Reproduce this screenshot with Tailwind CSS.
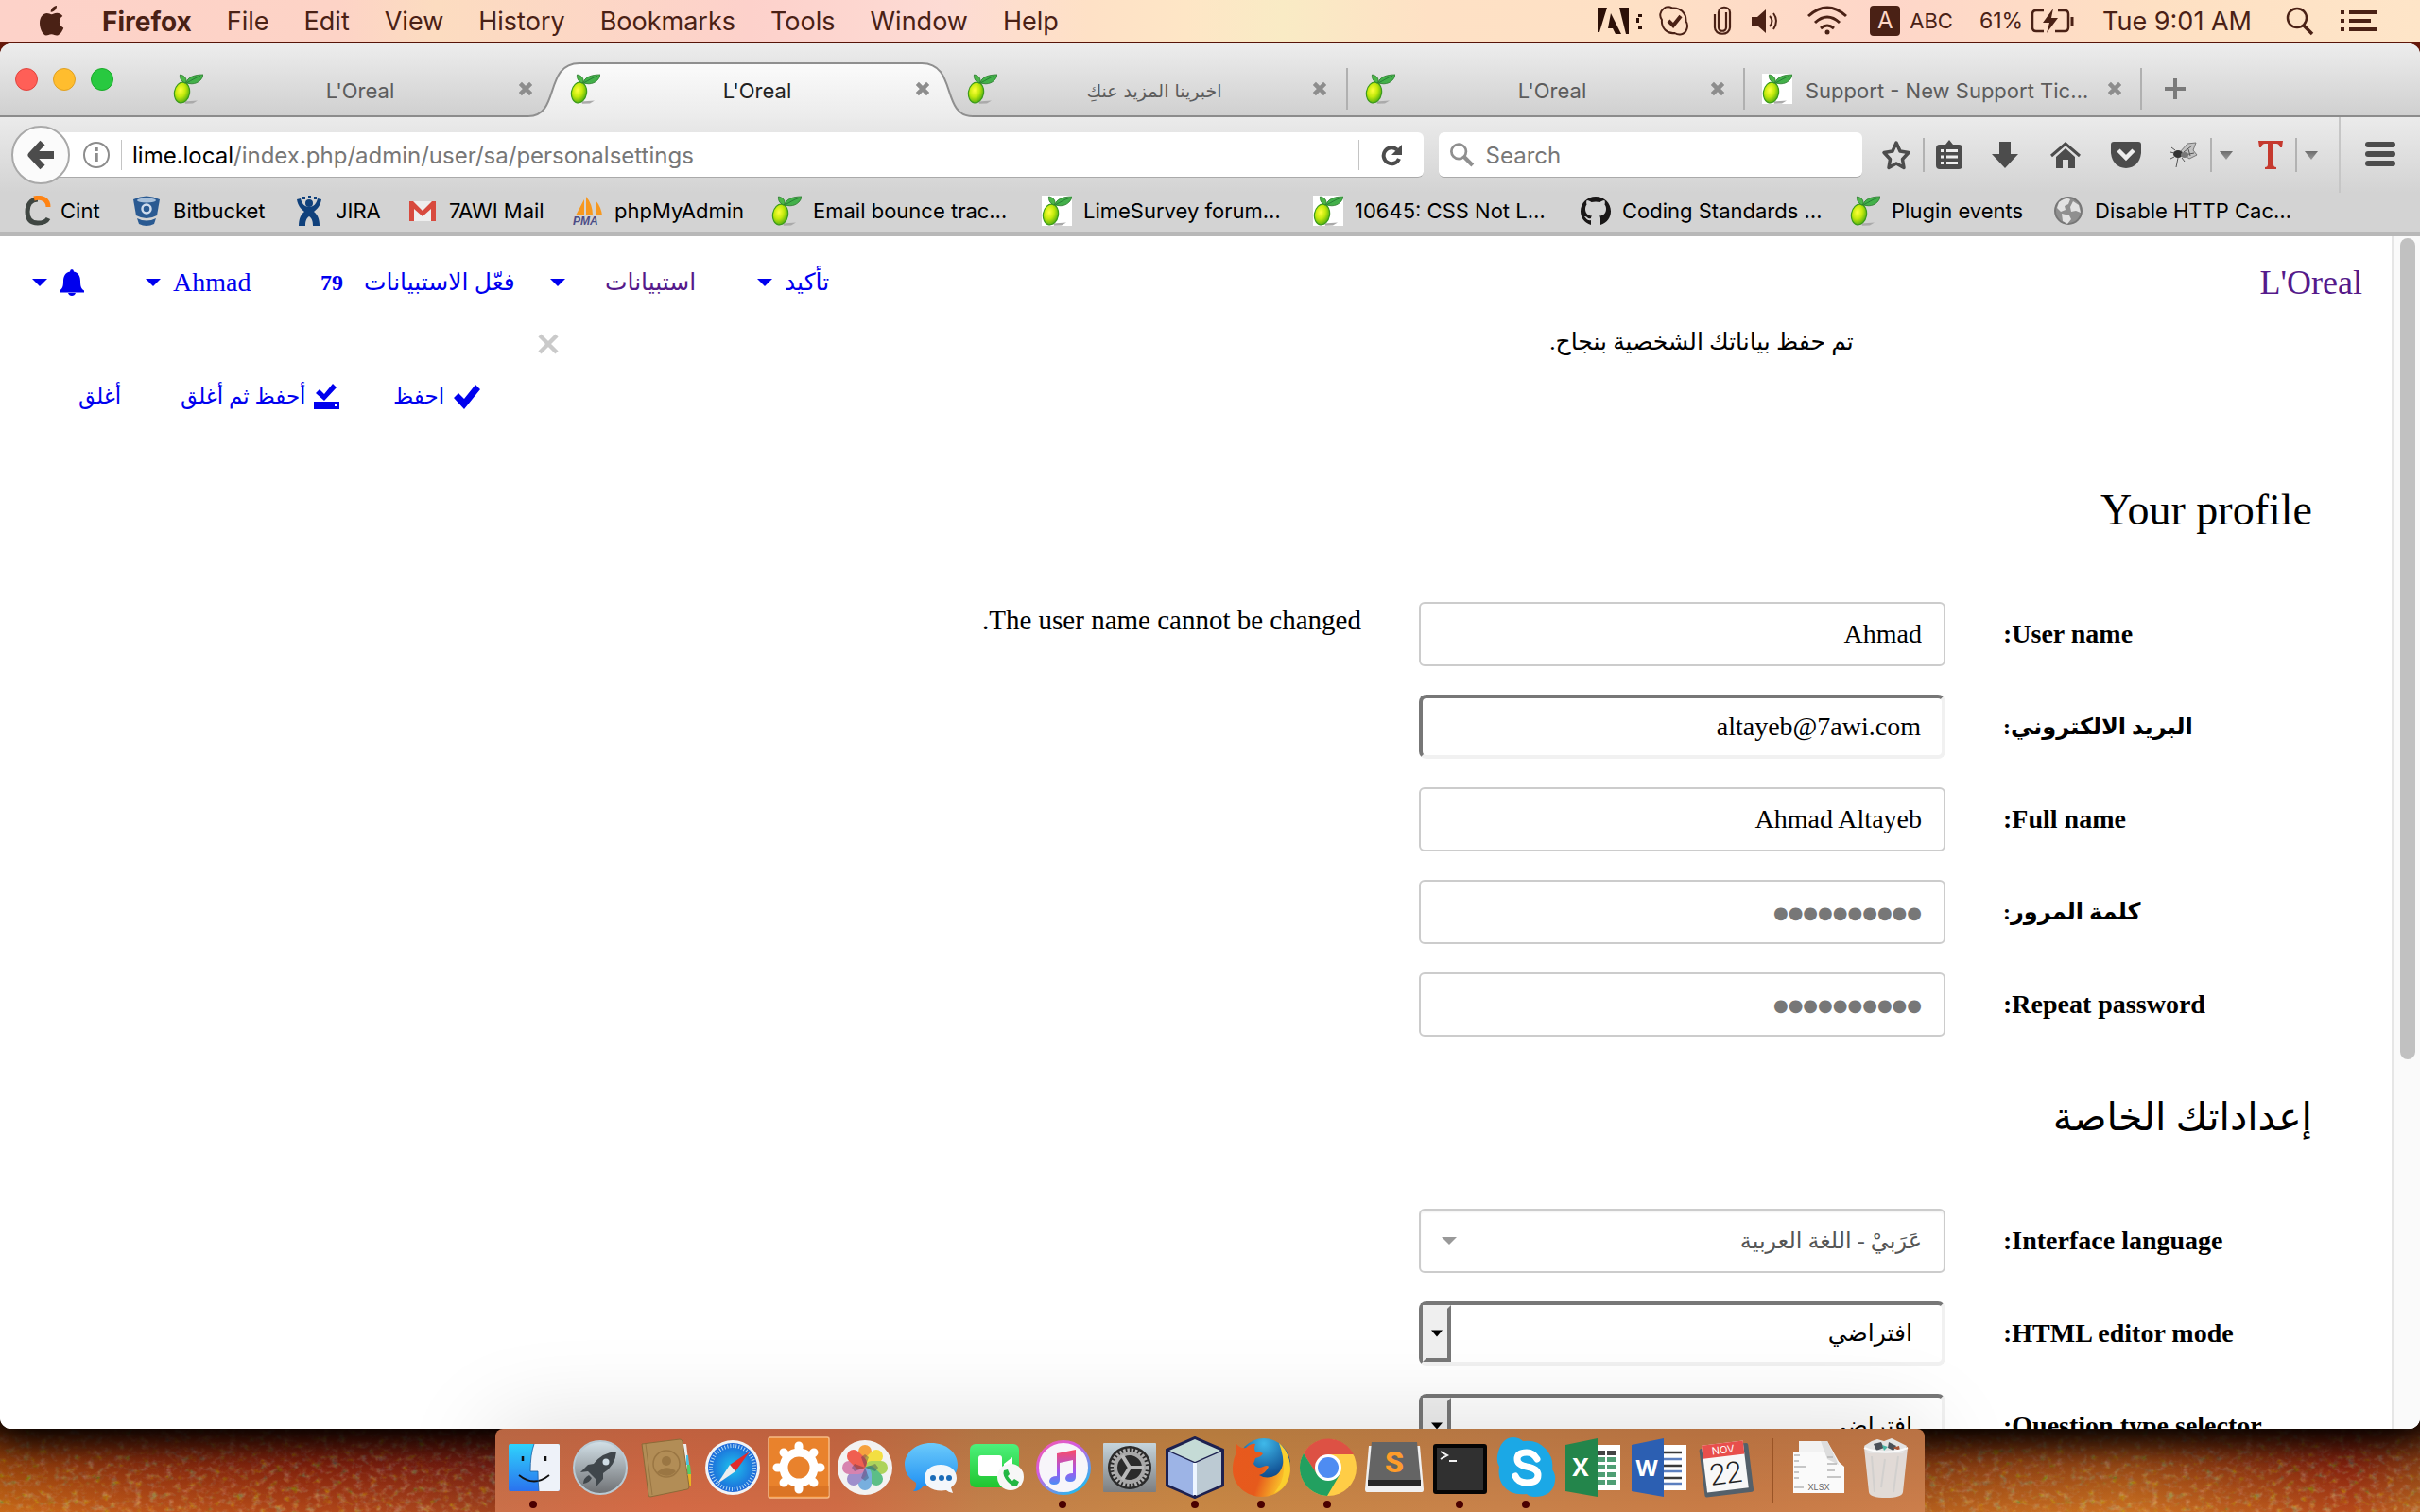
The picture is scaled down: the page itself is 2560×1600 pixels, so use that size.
<!DOCTYPE html>
<html lang="ar">
<head>
<meta charset="utf-8">
<title>L'Oreal</title>
<script src="https://cdn.jsdelivr.net/npm/@tailwindcss/browser@4"></script>
</head>
<body class="relative flex h-screen flex-col overflow-hidden bg-[#7a1d0c] font-['Inter','DejaVu_Sans',sans-serif] text-black">

<!-- shared symbols -->
<svg class="absolute h-0 w-0" aria-hidden="true">
  <defs>
    <radialGradient id="limeFill" cx=".38" cy=".4" r=".65"><stop offset="0" stop-color="#ffff3c"/><stop offset=".5" stop-color="#c3ea0c"/><stop offset="1" stop-color="#4fae12"/></radialGradient>
    <linearGradient id="arrowFill" x1="0" y1="0" x2="0" y2="1"><stop offset="0" stop-color="#6c6c6c"/><stop offset="1" stop-color="#9a9a9a"/></linearGradient>
    <symbol id="lime" viewBox="0 0 32 32">
      <path d="M12 29.500l14-1-5 3-8 .3z" fill="#aaa"/>
      <ellipse cx="9.500" cy="20" rx="8" ry="11" transform="rotate(10 9.500 20)" fill="url(#limeFill)" stroke="#3c9a1c" stroke-width="1.200"/>
      <path d="M13 10C8 8 7 4 7.500 1c5 1 7 4 6.500 8z" fill="#4cb648" stroke="#2a7a2c" stroke-width=".8"/>
      <path d="M14 10C15 4 22 1 32 1c-1 6-7 11-15 9.500z" fill="#43b04a" stroke="#2a7a2c" stroke-width=".8"/>
      <path d="M15 9.500C20 7 24 4 29 2.500" fill="none" stroke="#1e7430" stroke-width=".8"/>
    </symbol>
    <symbol id="close" viewBox="0 0 16 16"><path d="M3 3l10 10M13 3L3 13" stroke="#8d8d8d" stroke-width="4"/></symbol>
    <symbol id="caret" viewBox="0 0 16 8"><path d="M0 0h16L8 8z" fill="#0000ee"/></symbol>
    <symbol id="drop" viewBox="0 0 14 9"><path d="M0 0h14L7 9z" fill="url(#arrowFill)"/></symbol>
  </defs>
</svg>

<!-- desktop wallpaper -->
<svg class="absolute bottom-0 left-0 h-[100px] w-full" viewBox="0 0 2560 100" preserveAspectRatio="none" aria-hidden="true">
  <defs>
    <linearGradient id="wallX"><stop offset="0" stop-color="#b8580f"/><stop offset=".06" stop-color="#a83a12"/><stop offset=".13" stop-color="#98260f"/><stop offset=".2" stop-color="#8a2518"/><stop offset=".8" stop-color="#a85018"/><stop offset=".88" stop-color="#bc621c"/><stop offset=".93" stop-color="#a84416"/><stop offset=".97" stop-color="#a02a12"/><stop offset="1" stop-color="#a4511a"/></linearGradient>
    <linearGradient id="wallY" x1="0" y1="0" x2="0" y2="1"><stop offset=".1" stop-color="#1c0600" stop-opacity=".8"/><stop offset=".5" stop-color="#4a1206" stop-opacity=".3"/><stop offset="1" stop-color="#e8902c" stop-opacity=".3"/></linearGradient>
    <filter id="paint" x="0" y="0" width="100%" height="100%"><feTurbulence type="fractalNoise" baseFrequency=".12 .15" numOctaves="3" seed="7"/><feColorMatrix values="1.600 0 0 0 -.25  0 1.500 0 0 -.4  0 0 1.600 0 -.5  0 2.500 0 0 -1.050"/></filter>
  </defs>
  <rect width="2560" height="100" fill="url(#wallX)"/>
  <rect width="2560" height="100" filter="url(#paint)" opacity=".42"/>
  <rect width="2560" height="100" fill="url(#wallY)"/>
</svg>

<!-- system menu bar -->
<header class="z-10 mb-[2px] flex h-11 shrink-0 items-center whitespace-nowrap bg-[linear-gradient(90deg,#fdd2c9,#fdd3c6_14%,#fcdcc0_18%,#fdd1cb_31%,#fddbd4_39%,#fee1c6_45%,#fee6c6_49%,#f9ebc5_53%,#fee1c5_59%,#fee0c5_68%,#fed6c9_78%,#fee0c3_89%,#fee5c8)] pl-10 pr-[46px] text-[27px] leading-8 text-[#4a2115]">
  <svg class="mr-10 h-8 w-7" viewBox="0 0 28 32" fill="#4a2115"><path d="M20 0c.3 3-2.600 7-6.300 6.700C13.400 3.600 16.500.5 20 0zM14.500 9.200c1.500 0 3-1.400 5.800-1.400 2.600 0 4.800 1.500 6 3.300-5 3-4.200 10.200.9 12.300C26 27 23 31.500 20 31.500c-2.200 0-2.900-1.300-5.600-1.300-2.600 0-3.500 1.300-5.500 1.300C5.500 31.500 2 24.500 2 18.500 2 11.500 6 8 9.500 8c2.200 0 3.800 1.200 5 1.200z"/></svg>
  <nav class="flex items-center gap-[37px] pt-[2px]" dir="ltr">
    <span class="text-[28px] font-bold">Firefox</span><span>File</span><span>Edit</span><span>View</span><span>History</span><span>Bookmarks</span><span>Tools</span><span>Window</span><span>Help</span>
  </nav>
  <div class="ml-auto flex items-center" dir="ltr">
    <svg class="h-8 w-[50px]" viewBox="0 0 50 32" fill="#2c1008"><path d="M0 2h10L2 28H0zM23 2h10v28h-3zM14 8l11 22h-6l-3-6h-5z"/><path d="M43 9h4v3h-4zM41 13h3v5h-3zM43 22h4v3h-4z"/></svg>
    <svg class="ml-[14px] h-8 w-[34px]" viewBox="0 0 34 32" fill="none" stroke="#4a2115" stroke-width="2"><path d="M6 3c3-2.500 6-2 9-.5 8-1 15 5 14.500 14 3 4 1.500 13-6 14-2 .3-4-.3-6-1.500C10 30 3 24 4 15 1 11 2 6 6 3z"/><path d="M11 16l5 5 8-10" stroke-width="4"/></svg>
    <svg class="ml-6 h-8 w-5" viewBox="0 0 20 32" fill="none" stroke="#4a2115" stroke-width="2.200"><path d="M6 7v16c0 5 8 5 8 0V7M2 9v14c0 9 16 9 16 0V7C18 0 6 0 6 7"/></svg>
    <svg class="ml-5 mr-1 h-8 w-8" viewBox="0 0 32 32" fill="#4a2115"><path d="M1 12h6l9-8v25l-9-8H1z"/><path d="M20 11q5 5 0 11" fill="none" stroke="#4a2115" stroke-width="2"/><path d="M24 8q6 8 0 17" fill="none" stroke="#4a2115" stroke-width="2"/></svg>
    <svg class="ml-6 h-8 w-[42px]" viewBox="0 0 42 32" fill="none" stroke="#4a2115" stroke-width="3"><path d="M1 11q20-18 40 0M8 18q13-12 26 0M14 24q7-6 14 0"/><circle cx="21" cy="28" r="2.500" fill="#4a2115" stroke="none"/></svg>
    <span class="ml-6 flex h-8 w-8 items-center justify-center rounded bg-[#4a2115] text-2xl text-[#fed8c8]">A</span>
    <span class="ml-[10px] text-[22px]">ABC</span>
    <span class="ml-7 text-[23px]">61%</span>
    <svg class="ml-2 h-7 w-12" viewBox="0 0 48 28" fill="none" stroke="#4a2115" stroke-width="2.500"><path d="M14 3H6Q2 3 2 7v14q0 4 4 4h8M29 3h7q4 0 4 4v14q0 4-4 4H26"/><path d="M24 1L13 16h7l-3 11 12-16h-7z" fill="#4a2115" stroke="none"/><path d="M44 10v9" stroke-width="3"/></svg>
    <span class="ml-7 pt-[2px]">Tue 9:01 AM</span>
    <svg class="ml-9 h-8 w-[30px]" viewBox="0 0 30 32" fill="none" stroke="#4a2115" stroke-width="2.500"><circle cx="12" cy="13" r="10"/><path d="M19 21l9 9" stroke-width="3.500"/></svg>
    <svg class="ml-7 h-6 w-[38px]" viewBox="0 0 38 24" fill="#4a2115"><path d="M0 1h4v4H0zM0 10h4v4H0zM0 19h4v4H0zM9 1h29v4H9zM9 10h23v4H9zM9 19h29v4H9z"/></svg>
  </div>
</header>

<!-- browser window -->
<div class="relative flex min-h-0 flex-1 flex-col overflow-hidden rounded-xl bg-white shadow-[0_10px_40px_#000]">

  <!-- tab strip -->
  <div class="flex h-[78px] shrink-0 items-center border-b-2 border-[#8c8c8c] bg-linear-to-b from-[#ededed] to-[#d0d0d0] pl-4 text-[22px] text-[#5c5c5c] [&_span]:pt-1">
    <div class="flex w-[148px] gap-4">
      <button class="size-6 rounded-full border border-[#e0443e] bg-[#ff5f57]" aria-label="Close window"></button>
      <button class="size-6 rounded-full border border-[#dfa023] bg-[#ffbd2e]" aria-label="Minimise window"></button>
      <button class="size-6 rounded-full border border-[#1aab29] bg-[#28c940]" aria-label="Zoom window"></button>
    </div>
    <div class="flex h-full items-center pt-5">
      <div class="flex h-full w-[420px] items-center px-[19px]">
        <svg class="size-8 shrink-0"><use href="#lime"/></svg><span class="flex-1 text-center">L'Oreal</span><button aria-label="Close tab"><svg class="size-[18px]"><use href="#close"/></svg></button>
      </div>
      <div class="relative z-10 flex h-full w-[420px] items-center px-[19px] text-[#222]">
        <svg class="absolute -left-[25px] top-0 h-[60px] w-[470px]" viewBox="0 0 470 60"><defs><linearGradient id="tabFill" x1="0" y1="0" x2="0" y2="1"><stop offset="0" stop-color="#fbfbfb"/><stop offset="1" stop-color="#ebebeb"/></linearGradient></defs><path d="M0 57C34 57 16 1 54 1H416C454 1 436 57 470 57V60H0z" fill="url(#tabFill)"/><path d="M0 57C34 57 16 1 54 1H416C454 1 436 57 470 57" fill="none" stroke="#8f8f8f" stroke-width="2"/></svg>
        <svg class="relative size-8 shrink-0"><use href="#lime"/></svg><span class="relative flex-1 text-center">L'Oreal</span><button class="relative" aria-label="Close tab"><svg class="size-[18px]"><use href="#close"/></svg></button>
      </div>
      <div class="flex h-full w-[420px] items-center px-[19px]">
        <svg class="size-8 shrink-0"><use href="#lime"/></svg><span class="flex-1 text-center font-['DejaVu_Sans',sans-serif] text-[19px]" dir="rtl">اخبرينا المزيد عنكِ</span><button aria-label="Close tab"><svg class="size-[18px]"><use href="#close"/></svg></button>
      </div>
      <div class="h-11 w-[2px] bg-[#b0b0b0]"></div>
      <div class="flex h-full w-[418px] items-center px-[18px]">
        <svg class="size-8 shrink-0"><use href="#lime"/></svg><span class="flex-1 text-center">L'Oreal</span><button aria-label="Close tab"><svg class="size-[18px]"><use href="#close"/></svg></button>
      </div>
      <div class="h-11 w-[2px] bg-[#b0b0b0]"></div>
      <div class="flex h-full w-[418px] items-center px-[18px]">
        <svg class="size-8 shrink-0 bg-white"><use href="#lime"/></svg><span class="flex-1 whitespace-nowrap pl-[14px] text-left">Support - New Support Tic…</span><button aria-label="Close tab"><svg class="size-[18px]"><use href="#close"/></svg></button>
      </div>
      <div class="h-11 w-[2px] bg-[#b0b0b0]"></div>
      <button class="ml-6" aria-label="New tab"><svg class="size-[22px]" viewBox="0 0 22 22"><path d="M11 0v22M0 11h22" stroke="#7a7a7a" stroke-width="4"/></svg></button>
    </div>
  </div>

  <!-- navigation toolbar -->
  <div class="flex h-[80px] shrink-0 items-center bg-linear-to-b from-[#ebebeb] to-[#d3d3d3] pl-3 pr-[26px]" dir="ltr">
    <button class="z-10 flex size-[62px] shrink-0 items-center justify-center rounded-full border-2 border-[#a9a9a9] bg-[#fbfbfb]" aria-label="Back"><svg class="h-8 w-8" viewBox="0 0 32 32" fill="none" stroke="#4c4c4c"><path d="M18 3L6 16l12 13" stroke-width="7" stroke-linejoin="round"/><path d="M6 16h24" stroke-width="8"/></svg></button>
    <div class="-ml-4 flex h-12 flex-1 items-center rounded-r-md border-b border-[#aaa] bg-white">
      <svg class="ml-[30px] size-7" viewBox="0 0 28 28" fill="none" stroke="#8c8c8c"><circle cx="14" cy="14" r="13" stroke-width="2"/><path d="M14 12v9M14 6v4" stroke-width="3.500"/></svg>
      <div class="ml-3 mr-[11px] h-8 w-px bg-[#c4c4c4]"></div>
      <div class="flex-1 pt-[3px] text-2xl text-[#777]"><span class="text-black">lime.local</span>/index.php/admin/user/sa/personalsettings</div>
      <div class="h-8 w-px bg-[#c4c4c4]"></div>
      <button class="mx-[22px]" aria-label="Reload"><svg class="size-6" viewBox="0 0 24 24" fill="none" stroke="#4c4c4c" stroke-width="4"><path d="M18 6.500A8.500 8.500 0 1 0 20 16"/><path d="M23 1v11H12z" fill="#4c4c4c" stroke="none"/></svg></button>
    </div>
    <div class="ml-4 flex h-12 w-[448px] items-center rounded-md border-b border-[#aaa] bg-white pl-3">
      <svg class="size-7" viewBox="0 0 28 28" fill="none" stroke="#8f8f8f"><circle cx="10" cy="10" r="8.500" stroke-width="3"/><path d="M16 16l10 10" stroke-width="4.500"/></svg>
      <input class="ml-3 w-full pt-[3px] text-2xl outline-none placeholder:text-[#777]" type="search" placeholder="Search" aria-label="Search">
    </div>
    <svg class="ml-5 size-8" viewBox="0 0 32 32" fill="none" stroke="#4c4c4c" stroke-width="3.500" stroke-linejoin="round"><path d="M16 3l4 9 9 1.500-6.500 7 1.500 9L16 25l-8 4.500 1.500-9L3 13.500 12 12z"/></svg>
    <div class="ml-3 h-9 w-[2px] bg-[#b2b2b2]"></div>
    <svg class="ml-3 h-8 w-7" viewBox="0 0 28 32"><path d="M10 5l4-5 4 5h6q4 0 4 4v18q0 4-4 4H4q-4 0-4-4V9q0-4 4-4z" fill="#4c4c4c"/><path d="M5 10h3v3H5zM11 10h12v3H11zM5 16.500h3v3H5zM11 16.500h12v3H11zM5 23h3v3H5zM11 23h12v3H11z" fill="#eee"/></svg>
    <svg class="ml-[31px] h-7 w-7" viewBox="0 0 28 28" fill="#4c4c4c"><path d="M8 0h12v13h8L14 28 0 13h8z"/></svg>
    <svg class="ml-[34px] h-7 w-8" viewBox="0 0 32 28" fill="none" stroke="#4c4c4c"><path d="M1 15L16 2l15 13" stroke-width="3"/><path d="M6 16L16 7l10 9v12h-7v-9h-6v9H6z" fill="#4c4c4c" stroke="none"/></svg>
    <svg class="ml-8 h-7 w-8" viewBox="0 0 32 28"><path d="M3 0h26q3 0 3 3v9Q30 27 16 28 2 27 0 12V3q0-3 3-3z" fill="#4c4c4c"/><path d="M8 9l8 8 8-8" fill="none" stroke="#eee" stroke-width="4.500"/></svg>
    <svg class="ml-7 h-7 w-[34px]" viewBox="0 0 34 28"><path d="M13 11L21 2l9-1-3 8 4 5-8 4z" fill="#c2c2c2" stroke="#777"/><path d="M17 11l9-7M18 14l10-2M22 8l2 7" stroke="#555"/><ellipse cx="11" cy="13" rx="5" ry="4" fill="#333"/><ellipse cx="18" cy="14" rx="4" ry="3" fill="#777"/><path d="M8 9L4 6M7 12l-4-1M7 16l-4 2M11 17l-2 10M15 17l3 4" stroke="#555"/></svg>
    <div class="ml-[11px] h-9 w-[2px] bg-[#b2b2b2]"></div>
    <svg class="ml-2 h-[9px] w-[14px]"><use href="#drop"/></svg>
    <svg class="ml-[26px] h-8 w-7" viewBox="0 0 28 32"><path d="M1 1h26l-1 7h-2q-1-4-4-4h-3v22q0 3 3 3v2H8v-2q3 0 3-3V4H8Q5 4 4 8H2z" fill="#c5392e"/></svg>
    <div class="ml-3 h-9 w-[2px] bg-[#b2b2b2]"></div>
    <svg class="ml-2 h-[9px] w-[14px]"><use href="#drop"/></svg>
    <div class="ml-[22px] h-full w-[2px] bg-[#c6c6c6]"></div>
    <button class="ml-[26px]" aria-label="Open menu"><svg class="h-7 w-8" viewBox="0 0 32 28" fill="#4c4c4c"><rect width="32" height="6" rx="3"/><rect y="10" width="32" height="6" rx="3"/><rect y="20" width="32" height="6" rx="3"/></svg></button>
  </div>

  <!-- bookmarks toolbar -->
  <nav class="flex h-[46px] shrink-0 items-start overflow-hidden whitespace-nowrap border-b-4 border-[#b8b8b8] bg-[#d3d3d3] pl-6 text-[22px] leading-[38px] [&_a]:flex [&_a]:shrink-0 [&_a]:items-center [&_svg]:mr-3 [&_svg]:size-8" dir="ltr">
    <a href="#" class="w-[115px]"><svg viewBox="0 0 32 32" fill="none" stroke-width="5"><path d="M16 4C8 4 5 10 5 17c0 8 4 12 11 12 5 0 9-1 11-5" stroke="#3f4642"/><path d="M12 3c8-2 15 1 15 9" stroke="#ff8414"/></svg><span class="-ml-1">Cint</span></a>
    <a href="#" class="w-[172px]"><svg viewBox="0 0 32 32"><path d="M2 4Q16-3 30 4l-3 17q-11 6-22 0z" fill="#2a5a92"/><ellipse cx="16" cy="5" rx="10" ry="2.500" fill="#a8c0da"/><circle cx="16" cy="14" r="4.500" fill="#2a5a92" stroke="#cfdced" stroke-width="2.500"/><path d="M6 24q10 5 20 0l-2 6q-8 4-16 0z" fill="#2a5a92"/></svg>Bitbucket</a>
    <a href="#" class="w-[120px]"><svg viewBox="0 0 32 32" fill="#10417c"><circle cx="16" cy="8" r="4"/><path d="M9 1h3v3H9zM15 0h3v3h-3zM21 1h3v3h-3zM3 4l4-1c1 5 4 9 9 9s8-4 9-9l4 1c-1 6-4 10-8 13 4 3 6 8 6 15h-7c0-5-1-8-4-10-3 2-4 5-4 10H5c0-7 2-12 6-15C7 14 4 10 3 4z"/></svg>JIRA</a>
    <a href="#" class="w-[175px]"><svg viewBox="0 0 32 32"><path d="M2 6h28v21H2z" fill="#eee"/><path d="M2 27V6h4l10 10L26 6h4v21h-5V14l-9 8-9-8v13z" fill="#d84a3e"/></svg>7AWI Mail</a>
    <a href="#" class="w-[210px]"><svg viewBox="0 0 32 32"><path d="M12 4v17H3zM14 1v20h7q0-12-7-20zM24 5v16h7q-1-9-7-16z" fill="#f7981f"/><text x="0" y="31" font-family="Liberation Sans" font-size="12" font-weight="700" font-style="italic" fill="#4c4c86">PMA</text></svg>phpMyAdmin</a>
    <a href="#" class="w-[286px]"><svg><use href="#lime"/></svg>Email bounce trac…</a>
    <a href="#" class="w-[287px]"><svg class="bg-white"><use href="#lime"/></svg>LimeSurvey forum…</a>
    <a href="#" class="w-[283px]"><svg class="bg-white"><use href="#lime"/></svg>10645: CSS Not L…</a>
    <a href="#" class="w-[285px]"><svg viewBox="0 0 32 32"><path d="M16 1C7 1 0 8 0 16.500 0 23 4 29 11 31v-5c-4 1-5-2-7-4 3-.5 3 3 7 2 0-1 .5-2 1-2.500C7 21 5 18 5 14c0-2 .5-3 1.500-4.500C6 8 6 6 6.700 5 9 5 10 6 11.500 7q4.500-1 9 0C22 6 23 5 25.300 5c.7 1 .7 3 .2 4.500C26.500 11 27 12 27 14c0 4-2 7-7 7.500 1 1 1 2 1 4V31c7-2 11-8 11-14.500C32 8 25 1 16 1z" fill="#191717"/></svg>Coding Standards …</a>
    <a href="#" class="w-[215px]"><svg><use href="#lime"/></svg>Plugin events</a>
    <a href="#"><svg viewBox="0 0 32 32"><circle cx="16" cy="16" r="14" fill="#8f8f8f" stroke="#777" stroke-width="2"/><path d="M6 7q8-6 12-3l-2 5-4 2 1 4-5 2-4-4zM21 6l6 4 2 8-5-2-5 1-1-5zM9 19l8 2 2 4-4 5-5-3z" fill="#e2e2e2"/></svg>Disable HTTP Cac…</a>
  </nav>

  <!-- page viewport -->
  <div class="flex min-h-0 flex-1 bg-white font-['Liberation_Serif','DejaVu_Sans',serif] text-[28px]">
    <main class="min-w-0 flex-1 overflow-hidden">

      <nav class="flex h-[98px] items-center whitespace-nowrap pl-[34px] pr-[31px] text-[#0000ee]" dir="ltr">
        <a href="#" class="flex w-[120px] items-center gap-[13px]" aria-label="Notifications"><svg class="h-2 w-4"><use href="#caret"/></svg><svg class="h-7 w-[26px]" viewBox="0 0 26 28" fill="#0000ee"><path d="M13 0q2 0 2 2.500c5 1 7 5 7 10 0 6 1 8 4 10v2H0v-2c3-2 4-4 4-10 0-5 2-9 7-10Q11 0 13 0zM9 25h8q-1 3-4 3t-4-3z"/></svg></a>
        <a href="#" class="flex w-[185px] items-center gap-[13px]"><svg class="h-2 w-4"><use href="#caret"/></svg>Ahmad</a>
        <a href="#" class="flex w-[243px] items-center gap-[22px]"><b class="text-2xl">79</b><span class="text-[25px]" dir="rtl">فعّل الاستبيانات</span></a>
        <a href="#" class="w-[58px]" aria-label="Toggle menu"><svg class="h-2 w-4"><use href="#caret"/></svg></a>
        <a href="#" class="w-[161px] text-[25px] text-[#551a8b]">استبيانات</a>
        <a href="#" class="flex items-center gap-[13px] text-[25px]"><svg class="h-2 w-4"><use href="#caret"/></svg>تأكيد</a>
        <a href="#" class="ml-auto text-4xl text-[#551a8b]">L'Oreal</a>
      </nav>

      <div class="mx-auto flex h-7 w-[55%] items-center" dir="rtl">
        <p class="text-[25px] leading-7" role="status">تم حفظ بياناتك الشخصية بنجاح.</p>
        <button class="mr-auto pt-1" aria-label="إغلاق"><svg class="size-[22px]" viewBox="0 0 22 22"><path d="M2 2l18 18M20 2L2 20" stroke="#cacaca" stroke-width="4.500"/></svg></button>
      </div>

      <div class="flex h-[88px] items-center whitespace-nowrap pl-[83px] text-[23px] text-[#0000ee]" dir="ltr">
        <a href="#" class="w-[108px]">أغلق</a>
        <a href="#" class="flex w-[225px] items-center gap-2"><span dir="rtl">أحفظ ثم أغلق</span><svg class="h-7 w-[27px]" viewBox="0 0 27 28" fill="#0000ee"><path d="M2 10l4-4 5 5L20 0l4 4-13 14z"/><path d="M0 19h27v8H0z"/><path d="M22 22h2v2h-2z" fill="#fff"/></svg></a>
        <a href="#" class="flex items-center gap-[10px]">احفظ<svg class="h-7 w-7" viewBox="0 0 28 28" fill="#0000ee"><path d="M0 15l5-5 6 6L23 1l5 5-17 21z"/></svg></a>
      </div>

      <form class="pr-[84px]" dir="rtl">
        <h2 class="mb-[72px] mt-[51px] text-[46px] leading-[50px]">Your profile</h2>
        <div class="grid grid-cols-[327fr_557fr_1440fr] gap-x-[61px] gap-y-[30px]">
          <label for="user" class="text-left font-bold leading-[68px]">User name:</label>
          <input id="user" type="text" value="Ahmad" readonly class="h-[68px] w-full rounded-md border-2 border-[#ccc] px-[23px]">
          <p class="text-[29px] leading-[38px]">The user name cannot be changed.</p>

          <label for="mail" class="text-left text-2xl font-bold leading-[68px]">البريد الالكتروني:</label>
          <input id="mail" type="email" value="altayeb@7awi.com" class="h-[68px] w-full rounded-lg border-4 border-[#f1f1f1] border-l-[#777] border-t-[#777] px-[22px] text-right">
          <span></span>

          <label for="full" class="text-left font-bold leading-[68px]">Full name:</label>
          <input id="full" type="text" value="Ahmad Altayeb" class="h-[68px] w-full rounded-md border-2 border-[#ccc] px-[23px]">
          <span></span>

          <label for="pass" class="text-left text-2xl font-bold leading-[68px]">كلمة المرور:</label>
          <input id="pass" type="password" placeholder="●●●●●●●●●●" class="h-[68px] w-full rounded-md border-2 border-[#ccc] px-[23px] font-['DejaVu_Sans',sans-serif] text-lg placeholder:text-[#777]">
          <span></span>

          <label for="pass2" class="text-left font-bold leading-[68px]">Repeat password:</label>
          <input id="pass2" type="password" placeholder="●●●●●●●●●●" class="h-[68px] w-full rounded-md border-2 border-[#ccc] px-[23px] font-['DejaVu_Sans',sans-serif] text-lg placeholder:text-[#777]">
          <span></span>
        </div>

        <h2 class="mb-[72px] mt-[60px] text-[41px] leading-[50px]">إعداداتك الخاصة</h2>
        <div class="grid grid-cols-[327fr_557fr_1440fr] gap-x-[61px] gap-y-[30px]">
          <label for="lang" class="text-left font-bold leading-[68px]">Interface language:</label>
          <div class="relative">
            <select id="lang" class="h-[68px] w-full appearance-none rounded-md border-2 border-[#ccc] bg-white px-[23px] text-2xl text-[#555] shadow-[inset_0_2px_2px_#0000000d]"><option>عَرَبيْ - اللغة العربية</option></select>
            <svg class="pointer-events-none absolute left-6 top-[30px] h-2 w-4" viewBox="0 0 16 8"><path d="M0 0h16L8 8z" fill="#999"/></svg>
          </div>
          <span></span>

          <label for="editor" class="text-left font-bold leading-[68px]">HTML editor mode:</label>
          <div class="relative">
            <select id="editor" class="h-[68px] w-full appearance-none rounded-lg border-4 border-[#f1f1f1] border-l-[#777] border-t-[#777] bg-white px-[31px] text-[25px]"><option>افتراضي</option></select>
            <span class="pointer-events-none absolute left-1 top-1 flex h-[60px] w-[30px] items-center justify-center border-4 border-[#efefef] border-b-[#777] border-r-[#777] bg-[#efefef]"><svg class="h-2 w-3" viewBox="0 0 14 8"><path d="M0 0h14L7 8z"/></svg></span>
          </div>
          <span></span>

          <label for="selector" class="text-left font-bold leading-[68px]">Question type selector:</label>
          <div class="relative">
            <select id="selector" class="h-[68px] w-full appearance-none rounded-lg border-4 border-[#f1f1f1] border-l-[#777] border-t-[#777] bg-white px-[31px] text-[25px]"><option>افتراضي</option></select>
            <span class="pointer-events-none absolute left-1 top-1 flex h-[60px] w-[30px] items-center justify-center border-4 border-[#efefef] border-b-[#777] border-r-[#777] bg-[#efefef]"><svg class="h-2 w-3" viewBox="0 0 14 8"><path d="M0 0h14L7 8z"/></svg></span>
          </div>
          <span></span>
        </div>
      </form>
    </main>
    <!-- scroll track -->
    <div class="w-[30px] border-l-2 border-[#e6e6e6] bg-[#fafafa] pl-[7px] pt-[2px]"><div class="h-[69%] w-4 rounded-full bg-[#c1c1c1]"></div></div>
  </div>
</div>

<!-- dock -->
<footer class="relative z-20 flex h-[88px] shrink-0 justify-center">
  <div class="flex rounded-t-lg bg-[linear-gradient(180deg,#00000018,#00000000),linear-gradient(90deg,#cb7049,#d46a45_12%,#d06c45_24%,#c4804a_34%,#c88744_50%,#c9824a_70%,#c97c46_85%,#cc7e4b)] px-[6px] shadow-[0_0_100px_#00000026] [&_svg]:h-[88px] [&_svg]:w-[70px]">
    <!-- Finder -->
    <svg viewBox="0 0 70 88"><defs><linearGradient id="fnd" x1="0" y1="0" x2="0" y2="1"><stop offset="0" stop-color="#2fd3fc"/><stop offset="1" stop-color="#2a72ee"/></linearGradient></defs><rect x="8" y="16" width="54" height="50" rx="2" fill="url(#fnd)"/><path d="M35 16h25q2 0 2 2v46q0 2-2 2H40q-1-10-1-21h-8q0-18 4-29z" fill="#eef2f9"/><path d="M23 29v5M47 29v5" stroke="#111" stroke-width="2.500"/><path d="M19 49q16 13 32 0" fill="none" stroke="#111" stroke-width="1.800"/><path d="M35 16q-4 11-4 29h8q0 11 1 21" fill="none" stroke="#1d5da0" stroke-width=".8"/><circle cx="34" cy="80" r="4" fill="#4a0000"/></svg>
    <!-- Launchpad -->
    <svg viewBox="0 0 70 88"><defs><linearGradient id="lau" x1="0" y1="0" x2="0" y2="1"><stop offset="0" stop-color="#d3e1e8"/><stop offset="1" stop-color="#6d6f72"/></linearGradient></defs><circle cx="35" cy="41" r="28" fill="url(#lau)" stroke="#b9cad4" stroke-width="2"/><path d="M52 24Q37 25 28 37l-6 1-8 8 8-1 9 9-1 8 8-9v-6Q51 39 52 24zM23 49l3 3q-2 5-9 6 0-6 6-9z" fill="#3f464b"/><circle cx="41" cy="35" r="3.500" fill="#cfdde5"/></svg>
    <!-- Contacts -->
    <svg viewBox="0 0 70 88"><path d="M52 16l4 0 5 42-6 4z" fill="#eee"/><path d="M56 28l2 0 1 10h-3z" fill="#4cc3e6"/><path d="M57 38h3l1 10h-4z" fill="#55cc66"/><path d="M58 48h3v12h-4z" fill="#e8b322"/><path d="M9 16l40-5q2 0 3 2l7 48q0 3-2 3l-39 8q-2 0-2-2z" fill="#b28d56" stroke="#8c6a38"/><path d="M13 16l7 54" stroke="#9a7643"/><circle cx="35" cy="37" r="14" fill="none" stroke="#9a7643" stroke-width="1.500"/><circle cx="35" cy="34" r="5" fill="#9a7643"/><path d="M25 46q10-9 20-1-8 9-20 1z" fill="#9a7643"/></svg>
    <!-- Safari -->
    <svg viewBox="0 0 70 88"><defs><radialGradient id="saf"><stop offset="0" stop-color="#1fc4ee"/><stop offset="1" stop-color="#1c65d8"/></radialGradient></defs><circle cx="35" cy="41" r="29" fill="#f1f3f5"/><circle cx="35" cy="41" r="26" fill="url(#saf)"/><circle cx="35" cy="41" r="23" fill="none" stroke="#b4dcf4" stroke-width="4" stroke-dasharray="1 2"/><path d="M53 24L32 38l6 7z" fill="#e22b2b"/><path d="M19 58l13-20 6 7z" fill="#eee"/></svg>
    <!-- Settings gear -->
    <svg viewBox="0 0 70 88"><rect x="3" y="9" width="64" height="64" rx="2" fill="#e9822c" stroke="#f6bb84" stroke-width="1.500"/><path d="M3 60h64v11H3z" fill="#c65f1c" opacity=".4"/><circle cx="35" cy="41" r="16" fill="none" stroke="#fff" stroke-width="9"/><g stroke="#fff" stroke-width="9" stroke-linecap="round"><path d="M35 20v-2M35 62v2M14 41h-2M56 41h2M20 26l-1-1M50 56l1 1M50 26l1-1M20 56l-1 1"/></g></svg>
    <!-- Photos -->
    <svg viewBox="0 0 70 88"><circle cx="35" cy="41" r="29" fill="#f2f2f2"/><g opacity=".9"><rect x="28" y="17" width="14" height="24" rx="7" fill="#f79a2b"/><rect x="28" y="17" width="14" height="24" rx="7" fill="#f4dd30" transform="rotate(45 35 41)"/><rect x="28" y="17" width="14" height="24" rx="7" fill="#a6d04b" transform="rotate(90 35 41)"/><rect x="28" y="17" width="14" height="24" rx="7" fill="#4cb97c" transform="rotate(135 35 41)"/><rect x="28" y="17" width="14" height="24" rx="7" fill="#6ba8dc" transform="rotate(180 35 41)"/><rect x="28" y="17" width="14" height="24" rx="7" fill="#9585c8" transform="rotate(225 35 41)"/><rect x="28" y="17" width="14" height="24" rx="7" fill="#d578a8" transform="rotate(270 35 41)"/><rect x="28" y="17" width="14" height="24" rx="7" fill="#f0503f" transform="rotate(315 35 41)"/></g><path d="M35 41l-4-11 4-3 4 3zM35 41l11-4 3 4-3 4zM35 41l4 11-4 3-4-3zM35 41l-11 4-3-4 3-4z" fill="#2a2a50" opacity=".35"/></svg>
    <!-- Messages -->
    <svg viewBox="0 0 70 88"><defs><linearGradient id="msg" x1="0" y1="0" x2="0" y2="1"><stop offset="0" stop-color="#6ccbfb"/><stop offset="1" stop-color="#1b8cf2"/></linearGradient></defs><path d="M35 15c16 0 28 10 28 23S51 61 35 61q-5 0-8-1-4 6-11 6 4-4 3-9Q7 50 7 38C7 25 19 15 35 15z" fill="url(#msg)"/><path d="M45 38c10 0 17 6 17 14 0 5-3 8-6 10l2 6q-5-1-7-3c-14 2-23-4-23-13 0-8 7-14 17-14z" fill="#f3f7fb"/><g fill="#1a6cb8"><circle cx="37" cy="52" r="3"/><circle cx="46" cy="52" r="3"/><circle cx="54" cy="52" r="3"/></g></svg>
    <!-- FaceTime -->
    <svg viewBox="0 0 70 88"><defs><linearGradient id="fct" x1="0" y1="0" x2="0" y2="1"><stop offset="0" stop-color="#4df17b"/><stop offset="1" stop-color="#1fc52f"/></linearGradient></defs><rect x="6" y="16" width="52" height="46" rx="6" fill="url(#fct)"/><rect x="15" y="28" width="25" height="22" rx="3" fill="#fff"/><path d="M42 37l9-7v18l-9-6z" fill="#fff"/><circle cx="49" cy="51" r="14" fill="#f7f7f7"/><path d="M42 44l4-1 2 5-2 2q2 4 5 5l2-2 5 3-2 4q-4 2-10-4-6-7-4-12z" fill="#23b744"/></svg>
    <!-- iTunes -->
    <svg viewBox="0 0 70 88"><defs><linearGradient id="itn" x1="0" y1="0" x2=".7" y2="1"><stop offset="0" stop-color="#f25ba8"/><stop offset=".4" stop-color="#d45be0"/><stop offset="1" stop-color="#27b8f0"/></linearGradient><linearGradient id="itm" x1="0" y1="0" x2="0" y2="1"><stop offset="0" stop-color="#fb4a63"/><stop offset=".6" stop-color="#a455ee"/><stop offset="1" stop-color="#4a8ef5"/></linearGradient></defs><circle cx="35" cy="41" r="27.500" fill="#f7f5fa" stroke="url(#itn)" stroke-width="3"/><path d="M28 26l20-4v29q0 5-6 5-5 0-5-4 1-5 8-5V33l-14 3v18q0 5-6 5-5 0-5-4 1-5 8-5z" fill="url(#itm)"/><circle cx="34" cy="80" r="4" fill="#4a0000"/></svg>
    <!-- System Preferences -->
    <svg viewBox="0 0 70 88"><defs><linearGradient id="sys" x1="0" y1="0" x2="0" y2="1"><stop offset="0" stop-color="#c6d5dc"/><stop offset="1" stop-color="#7c7e80"/></linearGradient></defs><rect x="7" y="15" width="56" height="52" rx="1" fill="url(#sys)"/><circle cx="35" cy="41" r="23" fill="#2b2b2b"/><circle cx="35" cy="41" r="18.500" fill="none" stroke="#b0b0b0" stroke-width="4" stroke-dasharray="2.500 1.700"/><circle cx="35" cy="41" r="15" fill="none" stroke="#a8a8a8" stroke-width="4"/><path d="M35 41h15M35 41l-8-13M35 41l-8 13" stroke="#b8b8b8" stroke-width="4"/></svg>
    <!-- NetBeans -->
    <svg viewBox="0 0 70 88"><path d="M34 9l30 13v38L34 73 4 60V22z" fill="#1d2150" stroke="#1d2150" stroke-width="2" stroke-linejoin="round"/><path d="M34 11l27 12-27 12L7 23z" fill="#c5dbd6"/><path d="M6 24l27 12v35L6 59z" fill="#9db4e6"/><path d="M62 24L35 36v35l27-12z" fill="#bccad3"/><path d="M34 36v34" stroke="#edf5ff" stroke-width="4"/><circle cx="34" cy="80" r="4" fill="#4a0000"/></svg>
    <!-- Firefox -->
    <svg viewBox="0 0 70 88"><defs><radialGradient id="ffb" cx=".5" cy=".1" r=".9"><stop offset="0" stop-color="#3fb9ea"/><stop offset=".6" stop-color="#155a9c"/><stop offset="1" stop-color="#0d2c5c"/></radialGradient><linearGradient id="fff" x1="0" y1="0" x2="1" y2=".3"><stop offset="0" stop-color="#e8591e"/><stop offset=".6" stop-color="#e65a1c"/><stop offset="1" stop-color="#fbc52a"/></linearGradient></defs><circle cx="37" cy="38" r="28" fill="url(#ffb)"/><path d="M8 16q4 5 10 4 6-5 10-4-2 5 0 8 5 0 8 2-2 4-8 5l-2 6q4 6 10 3 5-2 6 0-3 7-10 9 8 5 18 0 10-7 7-28 8 9 8 21c0 18-14 30-30 30S4 60 4 43c0-8 2-14 4-18z" fill="url(#fff)"/><path d="M53 15q14 12 11 33-4 15-16 20 10-12 10-25 0-15-5-28z" fill="#fbce2e"/><circle cx="34" cy="80" r="4" fill="#4a0000"/></svg>
    <!-- Chrome -->
    <svg viewBox="0 0 70 88"><circle cx="35" cy="41" r="30" fill="#ffcd46"/><path d="M9 26A30 30 0 0 1 62 27H35L22 47z" fill="#dd5144"/><path d="M9 26a30 30 0 0 0 25 45l14-24-13 7-12-6z" fill="#22a060"/><circle cx="35" cy="41" r="14" fill="#fff"/><circle cx="35" cy="41" r="11" fill="#4e8cf2"/><circle cx="34" cy="80" r="4" fill="#4a0000"/></svg>
    <!-- Sublime Text -->
    <svg viewBox="0 0 70 88"><path d="M8 18h54l4 46q0 3-2 3H6q-2 0-2-3z" fill="#f0f0f0"/><path d="M11 14h48l4 42H7z" fill="#646464"/><path d="M7 54h56v7H7z" fill="#262626"/><text x="35" y="46" text-anchor="middle" font-family="Roboto" font-size="32" font-weight="900" fill="#ff9c2a">S</text></svg>
    <!-- Terminal -->
    <svg viewBox="0 0 70 88"><rect x="8" y="18" width="53" height="49" rx="1" fill="#303030" stroke="#050505" stroke-width="4"/><path d="M14 24l7 4-7 4M23 34h8" fill="none" stroke="#f2f2f2" stroke-width="2"/><circle cx="34" cy="80" r="4" fill="#4a0000"/></svg>
    <!-- Skype -->
    <svg viewBox="0 0 70 88"><path d="M20 9q7 0 11 4 15-2 24 8t7 22q4 5 3 12-2 17-22 17-5 0-8-3-17 2-25-9-6-9-4-20-4-6-1-16 4-14 15-15z" fill="#1ba8e6"/><path d="M46 32q-4-7-11-7-10 0-10 7 0 6 10 8 12 2 12 9 0 8-12 8-9 0-12-7" fill="none" stroke="#fff" stroke-width="7" stroke-linecap="round"/><circle cx="34" cy="80" r="4" fill="#4a0000"/></svg>
    <!-- Excel -->
    <svg viewBox="0 0 70 88"><path d="M36 17h28v48H36z" fill="#fff"/><path d="M40 23h8v5h-8zM50 23h9v5h-9z" fill="#444"/><path d="M40 30h8v5h-8zM50 30h9v5h-9zM40 38h8v5h-8zM50 38h9v5h-9zM40 46h8v5h-8zM50 46h9v5h-9zM40 54h8v5h-8zM50 54h9v5h-9z" fill="#4f9e74"/><path d="M6 17l34-7v62L6 66z" fill="#23854b"/><text x="22" y="50" text-anchor="middle" font-family="Open Sans" font-size="26" font-weight="700" fill="#fff">X</text></svg>
    <!-- Word -->
    <svg viewBox="0 0 70 88"><path d="M36 17h28v48H36z" fill="#fff"/><path d="M40 25h19M40 39h19M40 52h19" stroke="#3a3a3a" stroke-width="2.500"/><path d="M40 32h19M40 45h19M40 58h19" stroke="#5b7fbf" stroke-width="2.500"/><path d="M6 17l34-7v62L6 66z" fill="#2c5fb2"/><text x="22" y="50" text-anchor="middle" font-family="Open Sans" font-size="24" font-weight="700" fill="#fff">W</text></svg>
    <!-- Calendar -->
    <svg viewBox="0 0 70 88"><g transform="rotate(-7 35 41)"><rect x="10" y="18" width="52" height="52" rx="2" fill="#54606a"/><rect x="13" y="15" width="44" height="50" fill="#f8f8f8"/><path d="M13 15h44v14H13z" fill="#e84f4c"/><text x="35" y="26" text-anchor="middle" font-family="Inter" font-size="11" fill="#fff">NOV</text><text x="35" y="58" text-anchor="middle" font-family="Roboto" font-weight="300" font-size="31" fill="#222">22</text></g></svg>
    <div class="flex w-[30px] items-center justify-center"><div class="h-[68px] w-[2px] bg-[#9a5426]"></div></div>
    <!-- spreadsheet stack -->
    <svg viewBox="0 0 70 88"><path d="M13 13h30l14 25v25H13z" fill="#f2f2f2"/><path d="M7 25h36l18 15v28H7z" fill="#fafafa"/><path d="M36 13l7 0 12 25-12-6z" fill="#ddd"/><path d="M8 28h6M8 34h5M8 40h12M8 46h5M8 52h5M43 30h6M43 37h10M43 44h8M43 51h14M8 62h10" stroke="#b5b5b5" stroke-width="1.500"/><text x="34" y="65" text-anchor="middle" font-family="Inter" font-size="9" fill="#666">XLSX</text></svg>
    <!-- Trash -->
    <svg viewBox="0 0 70 88"><path d="M12 18l8-5 6-2 7 2 8-3 8 4 8 4-4 8H16z" fill="#e4e4e4"/><path d="M22 16l8-2 3 6-8 3zM38 14l8 4-3 5-6-3z" fill="#4a5058"/><path d="M31 17l6 2-4 4z" fill="#48b5a4"/><path d="M42 20l7-2 1 5z" fill="#a85232"/><path d="M12 20q23 9 46 0l-5 47q-1 6-18 6t-18-6z" fill="#e3e2e1" opacity=".93"/><path d="M12 20q23 9 46 0" fill="none" stroke="#fafafa" stroke-width="2"/><path d="M20 29l3 38M34 32l-4 30M48 29l-5 38" stroke="#d2d0ce" stroke-width="2"/></svg>
  </div>
</footer>
</body>
</html>
